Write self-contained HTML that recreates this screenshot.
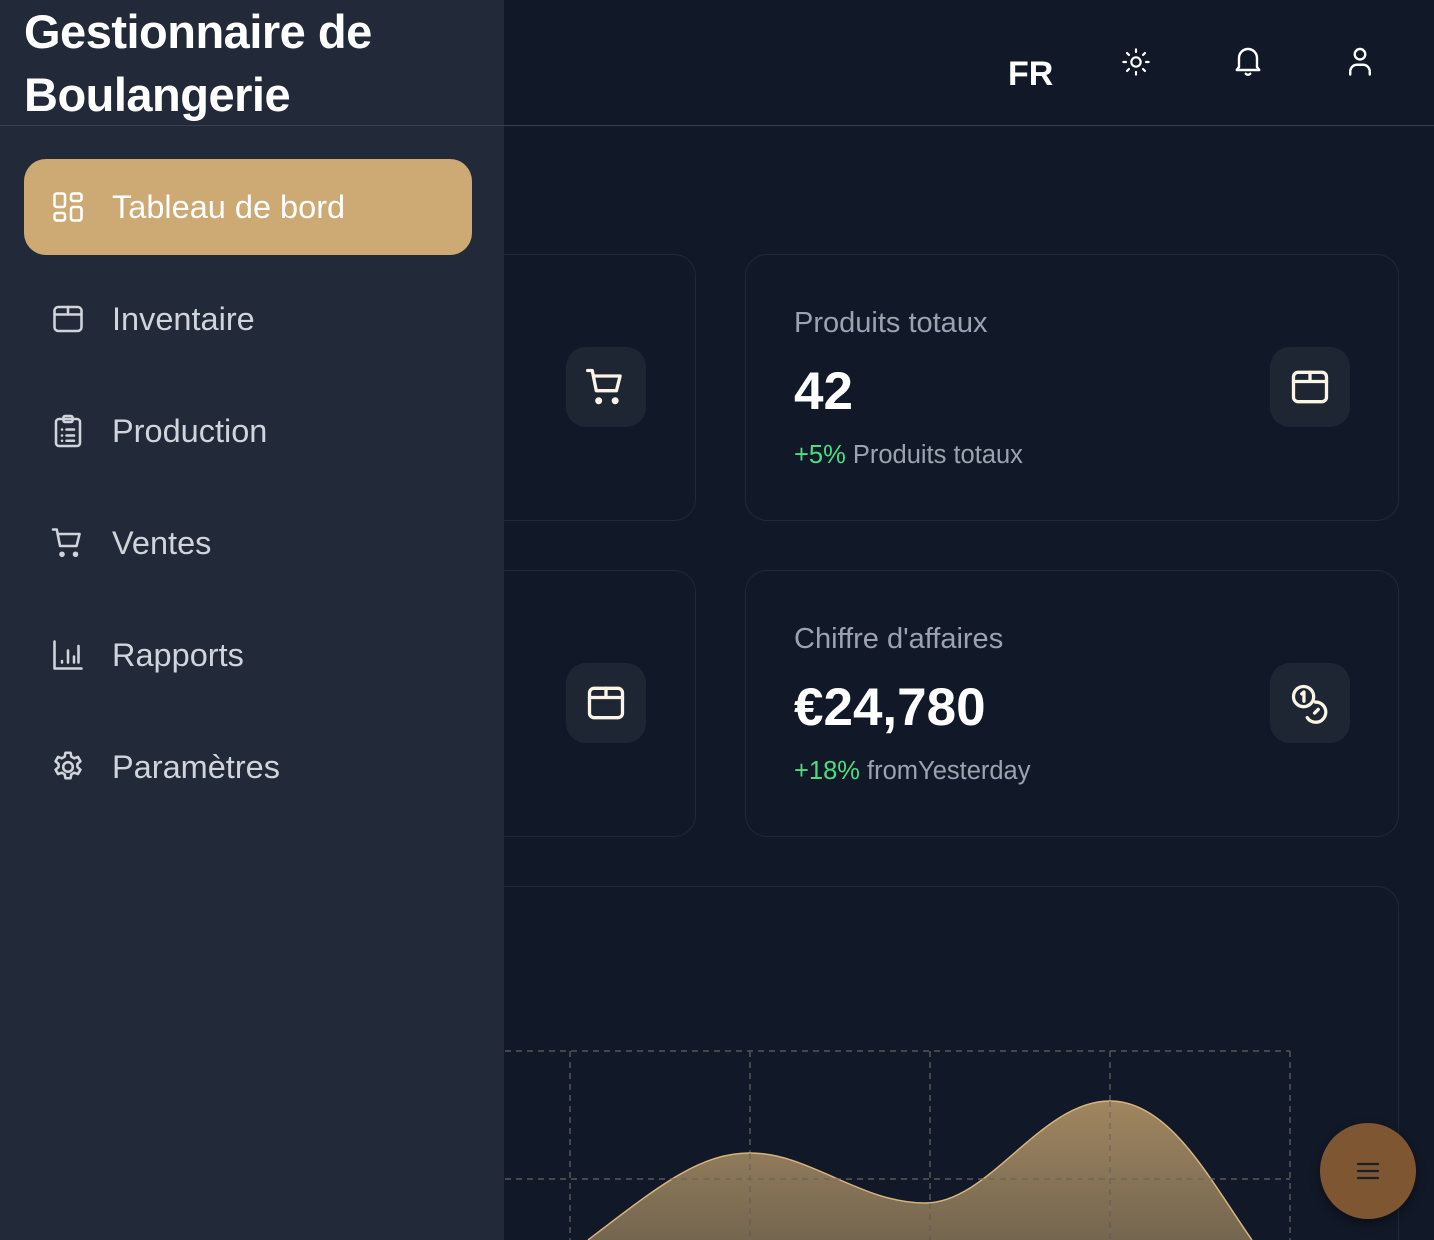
<!DOCTYPE html>
<html><head><meta charset="utf-8"><style>
*{margin:0;padding:0;box-sizing:border-box}
html,body{width:1434px;height:1240px;overflow:hidden}
body{background:#111827;font-family:"Liberation Sans",sans-serif;position:relative}
.side{position:absolute;left:0;top:0;width:504px;height:1240px;background:#222938}
.title{position:absolute;left:24px;top:0px;font-size:47px;font-weight:bold;color:#fff;line-height:63px;letter-spacing:-0.5px}
.hline{position:absolute;left:0;top:125px;width:1434px;height:1px;background:#374151}
.nav{position:absolute;left:24px;width:448px;height:96px;border-radius:22px;display:flex;align-items:center;padding-left:26px;color:#d1d5db;font-size:32.5px}
.nav svg{width:36px;height:36px;margin-right:26px;fill:none;stroke:currentColor;stroke-width:1.7;stroke-linecap:round;stroke-linejoin:round}
.nav.act{background:#cda974;color:#fff}
.card{position:absolute;border:1.5px solid #1f2937;border-radius:22px;background:#111827}
.lbl{position:absolute;left:48px;font-size:29px;color:#9ca3af}
.val{position:absolute;left:48px;font-size:53px;font-weight:bold;color:#fff}
.sub{position:absolute;left:48px;font-size:25.5px;color:#9ca3af}
.sub b{color:#4ade80;font-weight:normal}
.ib{position:absolute;width:80px;height:80px;border-radius:20px;background:#1f2633;display:flex;align-items:center;justify-content:center}
.ib svg{width:44px;height:44px;fill:none;stroke:#fbf5e6;stroke-width:1.8;stroke-linecap:round;stroke-linejoin:round}
.top svg{position:absolute;fill:none;stroke:#fff;stroke-width:1.6;stroke-linecap:round;stroke-linejoin:round}
</style></head><body>
<div class="card" style="left:420px;top:254px;width:276px;height:267px"></div>
<div class="card" style="left:420px;top:570px;width:276px;height:267px"></div>
<div class="card" style="left:745px;top:254px;width:654px;height:267px">
 <div class="lbl" style="top:52px">Produits totaux</div>
 <div class="val" style="top:106px">42</div>
 <div class="sub" style="top:186px"><b>+5%</b> Produits totaux</div>
</div>
<div class="card" style="left:745px;top:570px;width:654px;height:267px">
 <div class="lbl" style="top:52px">Chiffre d'affaires</div>
 <div class="val" style="top:106px">€24,780</div>
 <div class="sub" style="top:186px"><b>+18%</b> fromYesterday</div>
</div>
<div class="card" style="left:420px;top:886px;width:979px;height:380px"></div>
<div class="ib" style="left:566px;top:347px"><svg viewBox="0 0 24 24"><path d="M2 3h2.5l2.2 11h11l2-8H5.5"/><circle cx="8" cy="19.5" r="1" fill="#fbf5e6"/><circle cx="17" cy="19.5" r="1" fill="#fbf5e6"/></svg></div>
<div class="ib" style="left:566px;top:663px"><svg viewBox="0 0 24 24"><rect x="3" y="4" width="18" height="16" rx="2.5"/><path d="M3 9h18M12 4v5"/></svg></div>
<div class="ib" style="left:1270px;top:347px"><svg viewBox="0 0 24 24"><rect x="3" y="4" width="18" height="16" rx="2.5"/><path d="M3 9h18M12 4v5"/></svg></div>
<div class="ib" style="left:1270px;top:663px"><svg viewBox="0 0 24 24"><circle cx="8.5" cy="8.5" r="5.5"/><path d="M7.5 7l1.2-1v5"/><path d="M15 11.5a5.5 5.5 0 1 1-4.5 8.5M16.5 15.5l-2 2"/></svg></div>
<svg style="position:absolute;left:0;top:0" width="1434" height="1240">
<defs><linearGradient id="g" x1="0" y1="0" x2="0" y2="1"><stop offset="0" stop-color="#a88c63"/><stop offset="1" stop-color="#7a6a52"/></linearGradient></defs>
<g stroke="#555" stroke-width="1.5" stroke-dasharray="6 5" fill="none">
<path d="M505 1051H1290M505 1179H1290M570 1051V1240M750 1051V1240M930 1051V1240M1110 1051V1240M1290 1051V1240"/></g>
<path d="M588 1240C660 1185 700 1153 750 1153C810 1153 860 1203 925 1203C990 1203 1040 1101 1110 1101C1170 1101 1210 1180 1252 1240Z" fill="url(#g)" fill-opacity="0.95"/>
<path d="M588 1240C660 1185 700 1153 750 1153C810 1153 860 1203 925 1203C990 1203 1040 1101 1110 1101C1170 1101 1210 1180 1252 1240" fill="none" stroke="#d8b57c" stroke-width="1.5"/>
<g stroke="#555" stroke-width="1.5" stroke-dasharray="6 5" fill="none" opacity="0.5"><path d="M505 1179H1290M750 1153V1240M930 1203V1240M1110 1101V1240"/></g>
</svg>
<div class="hline"></div>
<div class="side">
 <div class="title">Gestionnaire de<br>Boulangerie</div>
 <div class="hline" style="width:504px"></div>
 <div class="nav act" style="top:159px"><svg viewBox="0 0 24 24"><rect x="3" y="3" width="7" height="9" rx="1.5"/><rect x="14" y="3" width="7" height="5" rx="1.5"/><rect x="14" y="12" width="7" height="9" rx="1.5"/><rect x="3" y="16" width="7" height="5" rx="1.5"/></svg>Tableau de bord</div>
 <div class="nav" style="top:271px"><svg viewBox="0 0 24 24"><rect x="3" y="4" width="18" height="16" rx="2.5"/><path d="M3 9h18M12 4v5"/></svg>Inventaire</div>
 <div class="nav" style="top:383px"><svg viewBox="0 0 24 24"><rect x="4" y="4" width="16" height="18" rx="2"/><rect x="9" y="2" width="6" height="4" rx="1"/><path d="M8 11h.01M11 11h5M8 15h.01M11 15h5M8 18.5h.01M11 18.5h5"/></svg>Production</div>
 <div class="nav" style="top:495px"><svg viewBox="0 0 24 24"><path d="M2 3h2.5l2.2 11h11l2-8H5.5"/><circle cx="8" cy="19.5" r="1" fill="currentColor"/><circle cx="17" cy="19.5" r="1" fill="currentColor"/></svg>Ventes</div>
 <div class="nav" style="top:607px"><svg viewBox="0 0 24 24"><path d="M3 3v18h18M8 17v-1M12 17V9M16 17v-4M19 17V6"/></svg>Rapports</div>
 <div class="nav" style="top:719px"><svg viewBox="0 0 24 24"><path d="M10.3 2.5h3.4l.5 2.6 1.9 1.1 2.5-.9 1.7 2.9-2 1.7v2.2l2 1.7-1.7 2.9-2.5-.9-1.9 1.1-.5 2.6h-3.4l-.5-2.6-1.9-1.1-2.5.9-1.7-2.9 2-1.7v-2.2l-2-1.7 1.7-2.9 2.5.9 1.9-1.1z"/><circle cx="12" cy="12" r="3.2"/></svg>Paramètres</div>
</div>
<div class="top">
 <div style="position:absolute;left:1008px;top:55px;font-size:34px;font-weight:bold;color:#fff">FR</div>
 <svg style="left:1120px;top:46px" width="32" height="32" viewBox="0 0 24 24" stroke="#fbf0d8"><circle cx="12" cy="12" r="3.5"/><path d="M12 2.5v2M12 19.5v2M2.5 12h2M19.5 12h2M5.3 5.3l1.4 1.4M17.3 17.3l1.4 1.4M5.3 18.7l1.4-1.4M17.3 6.7l1.4-1.4"/></svg>
 <svg style="left:1230px;top:43px" width="36" height="36" viewBox="0 0 24 24"><path d="M6 16V10a6 6 0 0 1 12 0v6l1.5 2h-15z"/><path d="M10.5 20.5a2 2 0 0 0 3 0"/></svg>
 <svg style="left:1342px;top:43px" width="36" height="36" viewBox="0 0 24 24"><circle cx="12" cy="7.5" r="3.5"/><path d="M5.5 21v-2a4.5 4.5 0 0 1 4.5-4.5h4a4.5 4.5 0 0 1 4.5 4.5v2"/></svg>
</div>
<div style="position:absolute;left:1320px;top:1123px;width:96px;height:96px;border-radius:50%;background:#7f5632;box-shadow:0 4px 10px rgba(0,0,0,.4)">
 <svg style="position:absolute;left:36px;top:36px" width="24" height="24" viewBox="0 0 24 24" stroke="#1a1f2b" stroke-width="2.2" stroke-linecap="round"><path d="M2 5h20M2 12h20M2 19h20"/></svg>
</div>
</body></html>
